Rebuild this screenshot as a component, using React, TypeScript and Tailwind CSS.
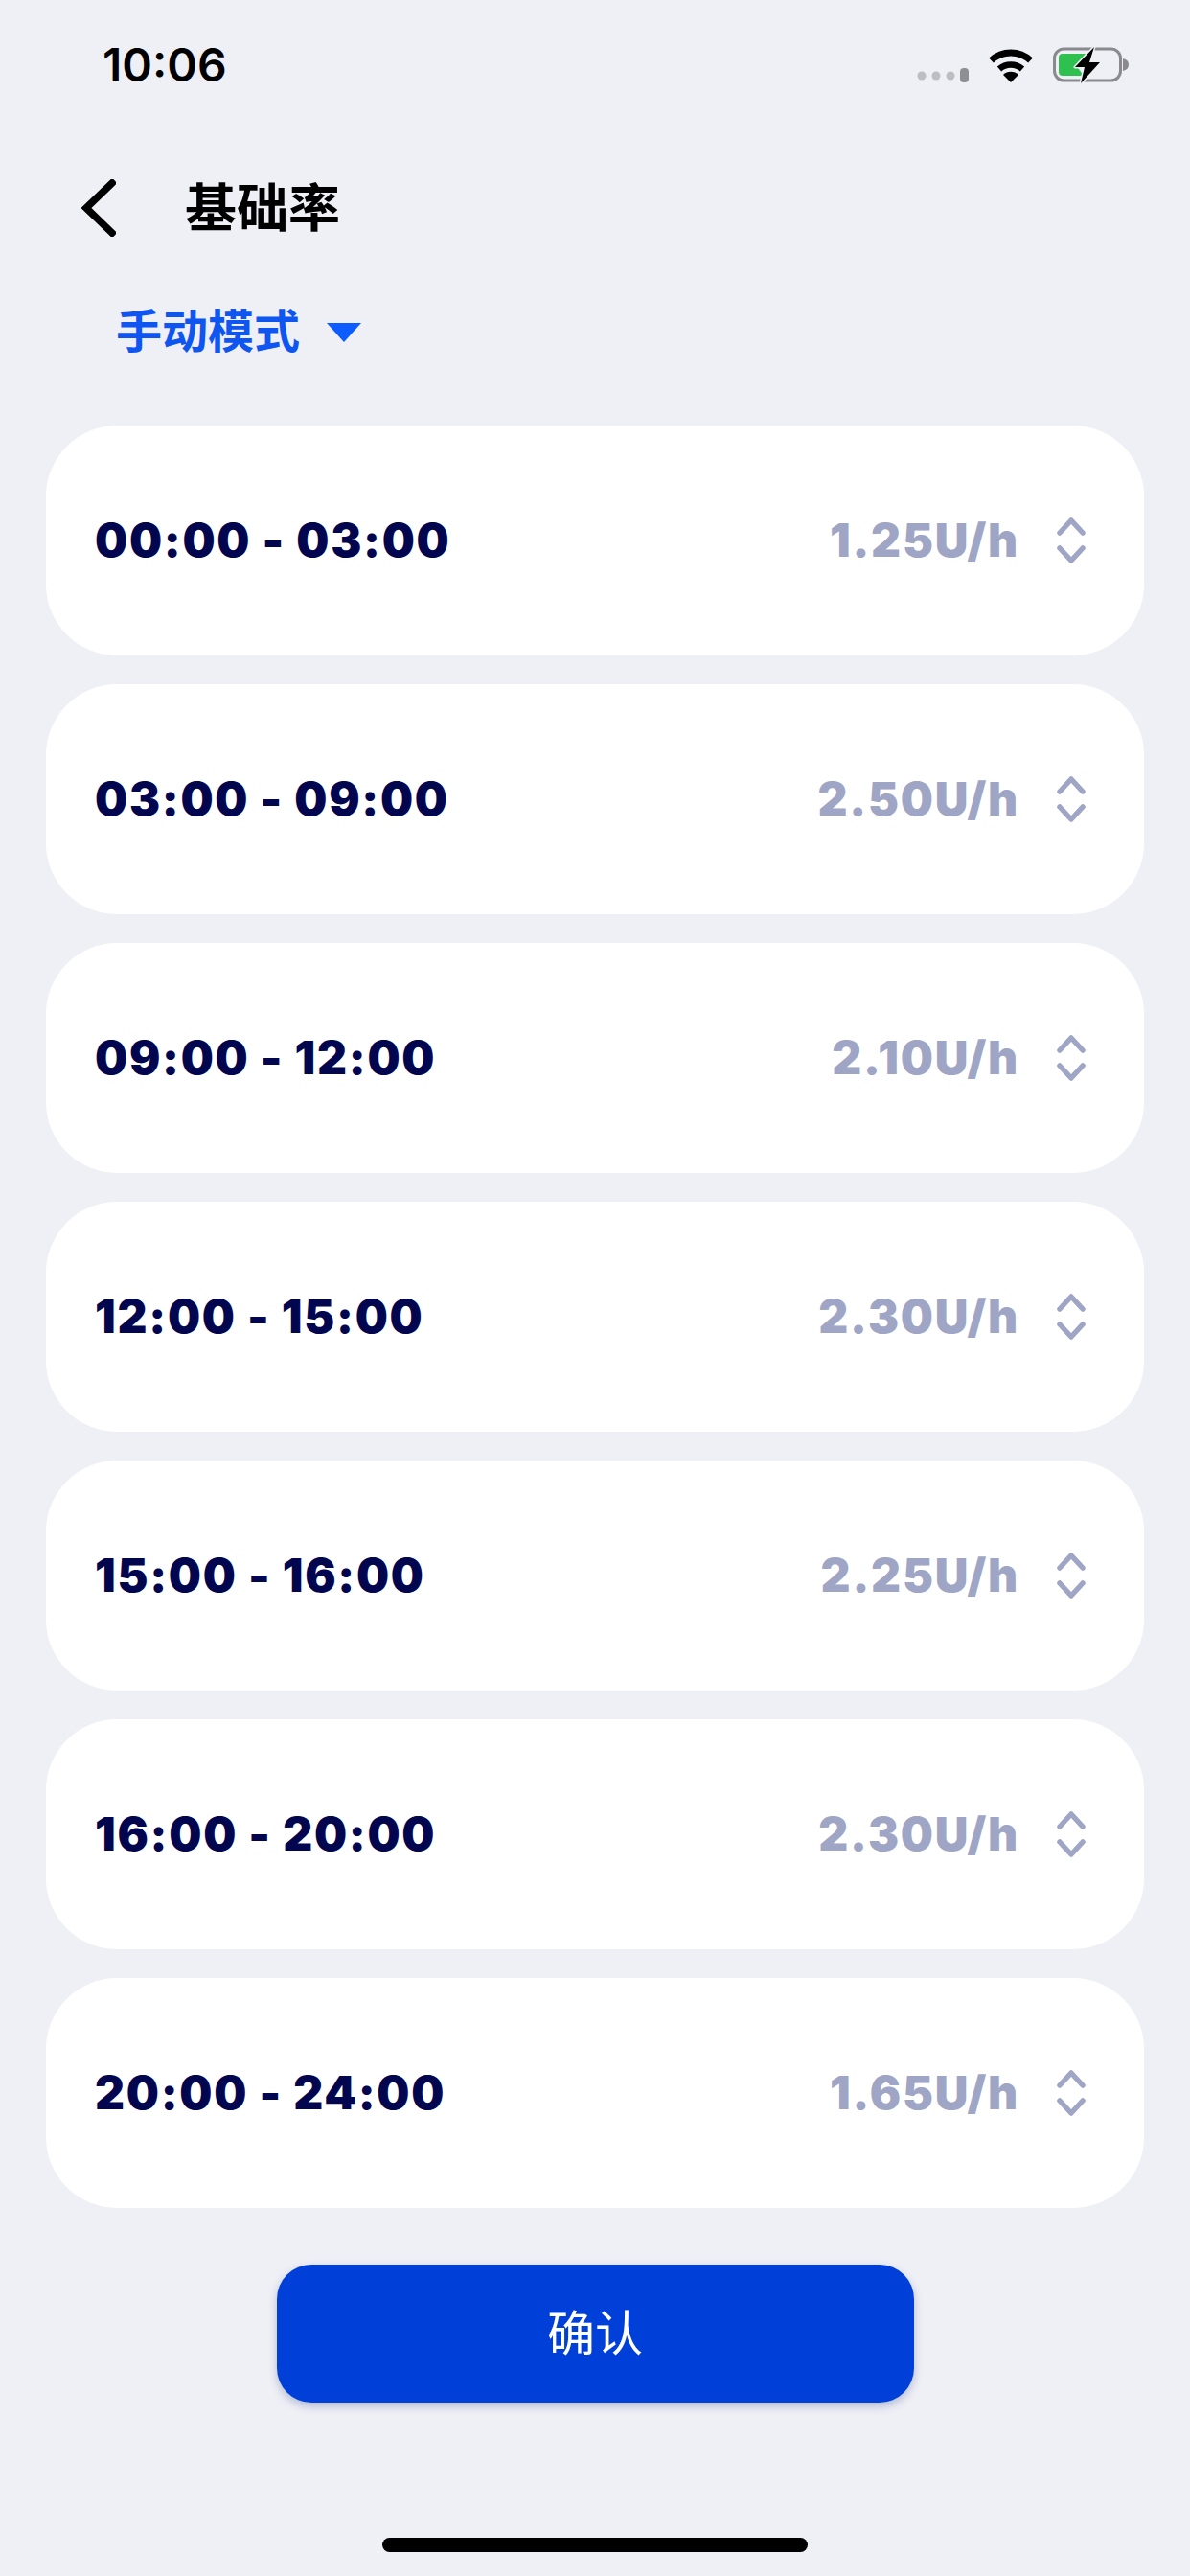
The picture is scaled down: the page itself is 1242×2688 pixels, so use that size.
const rows = [
  { time: "00:00 - 03:00", rate: "1.25U/h" },
  { time: "03:00 - 09:00", rate: "2.50U/h" },
  { time: "09:00 - 12:00", rate: "2.10U/h" },
  { time: "12:00 - 15:00", rate: "2.30U/h" },
  { time: "15:00 - 16:00", rate: "2.25U/h" },
  { time: "16:00 - 20:00", rate: "2.30U/h" },
  { time: "20:00 - 24:00", rate: "1.65U/h" },
]

function StatusIcons() {
  return (
    <div className="flex items-center gap-[20px]">
      <svg width="54" height="16" viewBox="0 0 54 16" className="mt-[20px]">
        <circle cx="5" cy="9" r="4.5" fill="#bdbdc2" />
        <circle cx="20" cy="9" r="4.5" fill="#bdbdc2" />
        <circle cx="35" cy="9" r="4.5" fill="#bdbdc2" />
        <rect x="45" y="1" width="9" height="15" rx="4" fill="#8e8e93" />
      </svg>
      <svg width="48" height="36" viewBox="0 0 48 36" fill="none">
        <path d="M3.5 13 A30 30 0 0 1 44.5 13" stroke="#000" strokeWidth="7" />
        <path d="M12 22 A18 18 0 0 1 36 22" stroke="#000" strokeWidth="6.5" />
        <path d="M24 36 L16 28 A11.5 11.5 0 0 1 32 28 Z" fill="#000" />
      </svg>
      <svg width="82" height="40" viewBox="0 0 82 40" fill="none">
        <rect x="1.5" y="3" width="69" height="33" rx="10" stroke="#8a8a8e" strokeWidth="3" />
        <path d="M73 13 C77 14 79 16 79 19.5 C79 23 77 25 73 26 Z" fill="#8a8a8e" />
        <path d="M10 8 H34 L24 20 L32 31 H10 Q6 31 6 27 V12 Q6 8 10 8 Z" fill="#2fc14f" />
        <path
          d="M43 1 L23 22 L33 22 L29 39 L49 17 L38 17 Z"
          fill="#000"
          stroke="#eff0f6"
          strokeWidth="3"
          strokeLinejoin="round"
          paintOrder="stroke"
        />
      </svg>
    </div>
  )
}

function Stepper() {
  return (
    <svg width="30" height="50" viewBox="0 0 30 50" fill="none" stroke="#9fa5c4" strokeWidth="5.5" strokeLinecap="round" strokeLinejoin="round">
      <path d="M3 17 L15 4 L27 17" />
      <path d="M3 33 L15 46 L27 33" />
    </svg>
  )
}

export default function App() {
  return (
    <div className="w-[1242px] h-[2688px] bg-[#eff0f6] overflow-hidden font-['Inter','Noto_Sans_CJK_SC',sans-serif]">
      <div className="h-[136px] flex items-center justify-between pl-[107px] pr-[61px]">
        <span className="text-[48px] font-semibold text-black">10:06</span>
        <StatusIcons />
      </div>

      <div className="h-[162px] flex items-center pl-[85px]">
        <svg width="36" height="60" viewBox="0 0 36 60" fill="none" stroke="#000" strokeWidth="7.5" strokeLinecap="square">
          <path d="M32 4 L5 30 L32 56" />
        </svg>
        <h1 className="ml-[72px] text-[54px] font-bold text-black">基础率</h1>
      </div>

      <div className="h-[96px] flex items-center pl-[121px]">
        <span className="text-[48px] font-semibold text-[#0f56f0]">手动模式</span>
        <svg width="36" height="20" viewBox="0 0 36 20" className="ml-[28px] mb-[-2px]">
          <path d="M0 0 H36 L18 20 Z" fill="#0d5cff" />
        </svg>
      </div>

      <div className="mt-[50px] mx-[48px] flex flex-col gap-[30px]">
        {rows.map((row) => (
          <div key={row.time} className="h-[240px] rounded-[74px] bg-white flex items-center justify-between pl-[51px] pr-[61px]">
            <span className="text-[48px] font-black tracking-[1.75px] text-[#02064f]">{row.time}</span>
            <div className="flex items-center gap-[39px]">
              <span className="text-[48px] font-black tracking-[1.8px] text-[#9fa5c4]">{row.rate}</span>
              <Stepper />
            </div>
          </div>
        ))}
      </div>

      <button className="block mt-[59px] mx-auto w-[665px] h-[144px] rounded-[36px] bg-[#0040d8] text-white text-[50px] shadow-[0_4px_10px_rgba(0,30,120,0.25)]">
        确认
      </button>

      <div className="mt-[141px] mx-auto w-[444px] h-[15px] rounded-full bg-black" />
    </div>
  )
}
